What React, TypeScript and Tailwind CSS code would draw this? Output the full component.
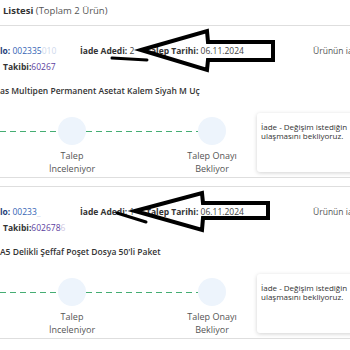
import React from "react";

type Item = {
  no: string;
  noFaint: string;
  adet: number;
  takip: string;
  takipFaint: string;
  name: string;
};

const items: Item[] = [
  {
    no: "002335",
    noFaint: "010",
    adet: 2,
    takip: "60267",
    takipFaint: "",
    name: "as Multipen Permanent Asetat Kalem Siyah M Uç",
  },
  {
    no: "00233",
    noFaint: "_",
    adet: 1,
    takip: "602678",
    takipFaint: "6",
    name: "A5 Delikli Şeffaf Poşet Dosya 50'li Paket",
  },
];

// dashed connector between steps
function Dashes({ w }: { w: number }) {
  return (
    <svg className="mt-[17px] block shrink-0" width={w} height="2" shapeRendering="crispEdges">
      <line x1="0" y1="1" x2={w} y2="1" stroke="#45ad73" strokeWidth="1" strokeDasharray="6 4" />
    </svg>
  );
}

function Step({ top, bottom }: { top: string; bottom: string }) {
  return (
    <div className="flex w-[28px] shrink-0 flex-col items-center pt-[4px]">
      <div className="h-[28px] w-[28px] rounded-full bg-[#edf4fc]" />
      <div className="mt-[4px] whitespace-nowrap text-center text-[9px] leading-[13px] text-[#555]">
        {top}
        <br />
        {bottom}
      </div>
    </div>
  );
}

function ReturnItem({ item }: { item: Item }) {
  return (
    <div className="h-[153px] border-y border-[#dedede]">
      <div className="grid grid-cols-[80px_66px_167px_1fr] pt-[19px] text-[8.5px] leading-[12px] whitespace-nowrap">
        <div>
          <span className="font-bold text-[#1f3f7a]">lo:</span>{" "}
          <span className="text-[#3565b5]">{item.no}</span>
          <span className="text-[#3565b5] opacity-25">{item.noFaint}</span>
        </div>
        <div className="text-[#444]">
          <span className="font-bold text-[#333]">İade Adedi:</span> {item.adet}
        </div>
        <div className="text-[#444]">
          <span className="font-bold text-[#333]">Talep Tarihi:</span> 06.11.2024
        </div>
        <div className="text-[#555]">Ürünün ia</div>
      </div>
      <div className="mt-[4px] pl-[3px] text-[8.5px] leading-[12px] whitespace-nowrap">
        <span className="font-bold text-[#333]">Takibi:</span>
        <span className="text-[#5b3e9e]">{item.takip}</span>
        <span className="text-[#5b3e9e] opacity-30">{item.takipFaint}</span>
      </div>
      <div className="mt-[12px] text-[8.5px] font-semibold leading-[12px] whitespace-nowrap text-[#333]">
        {item.name}
      </div>
      <div className="mt-[16px] flex items-start">
        <Dashes w={58} />
        <Step top="Talep" bottom="İnceleniyor" />
        <Dashes w={112} />
        <Step top="Talep Onayı" bottom="Bekliyor" />
        <div className="ml-[31px] h-[59px] w-[130px] shrink-0 rounded-[3px] bg-white px-[4px] pt-[9px] text-[8px] leading-[9px] whitespace-nowrap text-[#333] shadow-[0_1px_4px_rgba(0,0,0,0.18)]">
          İade - Değişim istediğin
          <br />
          ulaşmasını bekliyoruz.
        </div>
      </div>
    </div>
  );
}

export default function App() {
  return (
    <div className="relative h-[350px] w-[350px] overflow-hidden bg-white font-['Open_Sans',sans-serif]">
      <div className="h-[25px] pl-[3px] pt-[4px] text-[9.5px] leading-[13px] whitespace-nowrap">
        <span className="font-bold text-[#333]">Listesi</span>{" "}
        <span className="text-[#555]">(Toplam 2 Ürün)</span>
      </div>
      <div className="flex flex-col gap-[8px]">
        {items.map((it) => (
          <ReturnItem key={it.no} item={it} />
        ))}
      </div>
      <svg
        className="pointer-events-none absolute left-0 top-0"
        width="350"
        height="350"
        viewBox="0 0 350 350"
      >
        <g fill="none" stroke="#000" strokeWidth="4" strokeLinejoin="miter">
          <polygon points="141,50 207,31 208,42 273,42 273,60 208,60 207,70" />
          <polygon points="135,211 202,193 203,203 268,203 268,218 203,218 202,230" />
        </g>
        <g stroke="#000" strokeWidth="3" strokeLinecap="round">
          <line x1="112" y1="58" x2="147" y2="60" />
          <line x1="117" y1="213" x2="146" y2="222" />
        </g>
      </svg>
    </div>
  );
}
